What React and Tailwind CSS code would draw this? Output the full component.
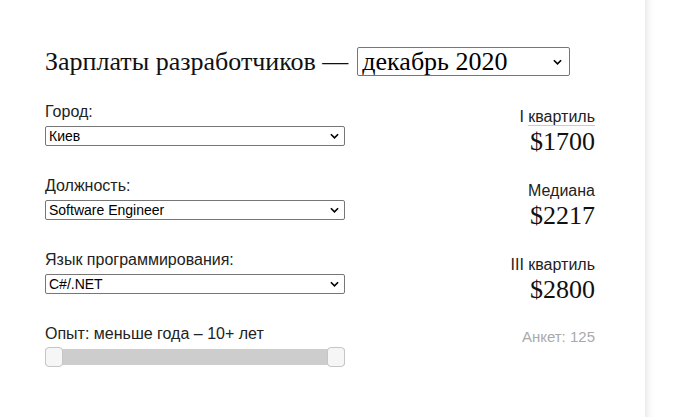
import { useState } from 'react';

const serif = "font-['Liberation_Serif','DejaVu_Serif',serif]";

function Chevron({ className }) {
  return (
    <svg viewBox="0 0 10 6" className={className} fill="none" stroke="currentColor" strokeWidth="1.8">
      <path d="M1 1l4 4 4-4" />
    </svg>
  );
}

function Field({ label, value, options }) {
  const [v, setV] = useState(value);
  return (
    <div className="flex flex-col">
      <label className="block text-[16px] leading-[18px] text-[#222] mb-[5px]">{label}</label>
      <div className="relative w-[300px] h-[20px]">
        <select
          value={v}
          onChange={(e) => setV(e.target.value)}
          className="block w-full h-[20px] appearance-none border border-[#767676] rounded-[2px] bg-white pl-[3px] text-[14px] leading-[18px] text-black outline-none"
        >
          {options.map((o) => (
            <option key={o}>{o}</option>
          ))}
        </select>
        <Chevron className="pointer-events-none absolute right-[6px] top-[7px] w-[9px] h-[6px] text-black" />
      </div>
    </div>
  );
}

function Stat({ label, value, underline }) {
  return (
    <div className="flex flex-col items-end">
      <div className="text-[16px] leading-[18px] text-[#222]">
        {underline ? (
          <>
            I <span className="border-b border-[#ccc]">квартиль</span>
          </>
        ) : (
          label
        )}
      </div>
      <div className={`${serif} text-[26px] leading-[28px] text-[#111] mt-[2px]`}>{value}</div>
    </div>
  );
}

export default function App() {
  const [month, setMonth] = useState('декабрь 2020');
  return (
    <div className="flex w-[687px] h-[417px] bg-white font-['Liberation_Sans',Arial,sans-serif]">
      <div className="w-[645px] shrink-0 pl-[45px] pr-[50px] pt-[47px]">
        <div className="flex items-center">
          <h1 className={`${serif} whitespace-nowrap text-[26px] leading-[29px] text-[#111] font-normal`}>Зарплаты разработчиков —</h1>
          <div className="relative ml-[9px] w-[213px] h-[29px]">
            <select
              value={month}
              onChange={(e) => setMonth(e.target.value)}
              className={`${serif} block w-full h-[29px] appearance-none border border-[#767676] rounded-[2px] bg-white pl-[4px] text-[26px] leading-[27px] text-black outline-none`}
            >
              <option>декабрь 2020</option>
              <option>июнь 2020</option>
              <option>декабрь 2019</option>
            </select>
            <Chevron className="pointer-events-none absolute right-[8px] top-[12px] w-[9px] h-[6px] text-black" />
          </div>
        </div>

        <div className="flex justify-between mt-[27px]">
          <div className="flex flex-col gap-[31px]">
            <Field label="Город:" value="Киев" options={['Киев', 'Харьков', 'Львов', 'Одесса', 'Днепр']} />
            <Field label="Должность:" value="Software Engineer" options={['Software Engineer', 'Senior Software Engineer', 'QA Engineer']} />
            <Field label="Язык программирования:" value="C#/.NET" options={['C#/.NET', 'Java', 'JavaScript', 'Python']} />
            <div className="flex flex-col">
              <div className="text-[16px] leading-[18px] text-[#222] mb-[4px]">Опыт: меньше года – 10+ лет</div>
              <div className="relative w-[300px] h-[20px]">
                <div className="absolute inset-x-0 top-[2px] h-[16px] bg-[#cdcdcd]" />
                <div className="absolute left-0 top-0 w-[18px] h-[20px] rounded-[4px] border border-[#c5c5c5] bg-[#f6f6f6]" />
                <div className="absolute right-0 top-0 w-[18px] h-[20px] rounded-[4px] border border-[#c5c5c5] bg-[#f6f6f6]" />
              </div>
            </div>
          </div>

          <div className="flex flex-col items-end pt-[5px] gap-[26px]">
            <Stat underline value="$1700" />
            <Stat label="Медиана" value="$2217" />
            <Stat label="III квартиль" value="$2800" />
            <div className="text-[15px] leading-[18px] text-[#aaa] -mt-[2px]">Анкет: 125</div>
          </div>
        </div>
      </div>
      <div className="flex-1 bg-gradient-to-r from-[#ececec] via-[#fafafa] to-white max-w-[10px]" />
    </div>
  );
}
